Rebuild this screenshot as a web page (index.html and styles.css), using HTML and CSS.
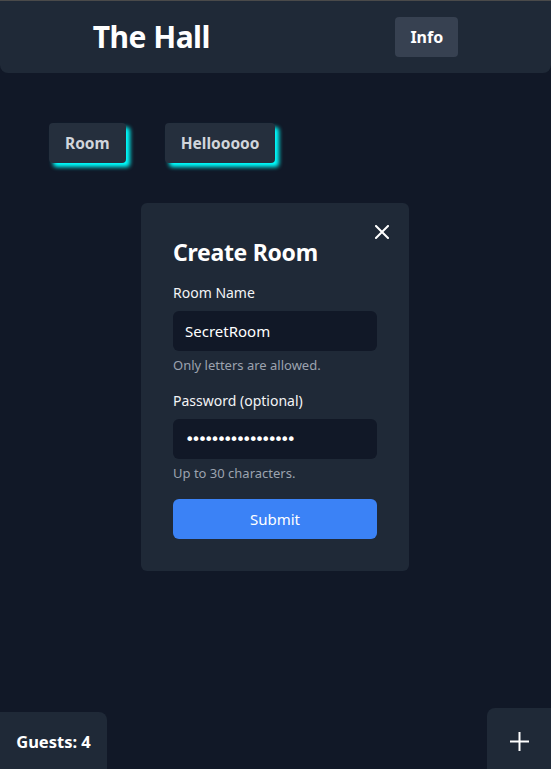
FILE: index.html
```html
<!DOCTYPE html>
<html>
<head>
<meta charset="utf-8">
<link rel="stylesheet" href="styles.css">
</head>
<body>
<div class="topline"></div>
<header class="header">
  <h1 class="title">The Hall</h1>
  <button class="info-btn">Info</button>
</header>
<div class="rooms">
  <button class="room-btn">Room</button>
  <button class="room-btn">Hellooooo</button>
</div>
<div class="modal-wrap">
  <div class="modal">
    <button class="close" aria-label="Close">
      <svg width="14" height="14" viewBox="0 0 14 14"><path d="M1 1L13 13M13 1L1 13" stroke="#fff" stroke-width="2" stroke-linecap="square"/></svg>
    </button>
    <h2 class="modal-title">Create Room</h2>
    <label class="label">Room Name</label>
    <div class="input">SecretRoom</div>
    <p class="hint">Only letters are allowed.</p>
    <label class="label">Password (optional)</label>
    <div class="input dots">•••••••••••••••••</div>
    <p class="hint">Up to 30 characters.</p>
    <button class="submit">Submit</button>
  </div>
</div>
<div class="bottom">
  <div class="guests">Guests: 4</div>
  <button class="plus" aria-label="Add">
    <svg width="19" height="19" viewBox="0 0 19 19"><path d="M9.5 0V19M0 9.5H19" stroke="#fff" stroke-width="2"/></svg>
  </button>
</div>
</body>
</html>
```

FILE: styles.css
```css
* { box-sizing: border-box; }
html, body { margin: 0; padding: 0; }
body {
  background: #111827;
  font-family: "Noto Sans", "Open Sans", sans-serif;
  color: #fff;
  width: 551px;
  height: 769px;
  overflow: hidden;
  display: flex;
  flex-direction: column;
}
button { font-family: inherit; border: none; cursor: pointer; }
.topline { height: 1px; background: #4a4a4a; flex: none; }
.header {
  flex: none;
  height: 72px;
  background: #1f2937;
  border-radius: 0 0 8px 8px;
  display: flex;
  align-items: center;
  justify-content: space-around;
}
.title {
  margin: 0;
  font-size: 30px;
  font-weight: 700;
  line-height: 1;
  letter-spacing: -0.5px;
  color: #fff;
}
.info-btn {
  height: 40px;
  width: 63px;
  background: #374151;
  color: #fff;
  font-weight: 700;
  font-size: 16px;
  border-radius: 4px;
}
.rooms {
  flex: none;
  display: flex;
  gap: 39px;
  padding: 50px 0 0 49px;
}
.room-btn {
  height: 40px;
  padding: 0 16px;
  background: #252f3d;
  color: #d1d5db;
  font-weight: 700;
  font-size: 15.5px;
  border-radius: 4px;
  box-shadow: 4px 4px 4px #00ffff;
}
.modal-wrap {
  flex: none;
  display: flex;
  padding-top: 40px;
  padding-left: 141px;
}
.modal {
  position: relative;
  width: 268px;
  background: #1f2937;
  border-radius: 6px;
  padding: 35px 32px 32px;
  display: flex;
  flex-direction: column;
}
.close {
  position: absolute;
  top: 22px;
  right: 20px;
  background: none;
  padding: 0;
  width: 14px;
  height: 14px;
  display: flex;
}
.modal-title {
  margin: 0 0 17px;
  font-size: 23px;
  font-weight: 700;
  line-height: 28px;
  letter-spacing: -0.3px;
}
.label {
  font-size: 14px;
  font-weight: 400;
  line-height: 20px;
  margin-bottom: 8px;
  color: #f3f4f6;
}
.input {
  height: 40px;
  background: #111827;
  border-radius: 6px;
  padding: 0 12px;
  display: flex;
  align-items: center;
  font-size: 15px;
  color: #fff;
}
.dots { font-size: 16px; letter-spacing: -3.1px; font-family: "DejaVu Sans", sans-serif; }
.hint {
  margin: 4px 0 16px;
  font-size: 13px;
  line-height: 20px;
  color: #9ca3af;
}
.submit {
  height: 40px;
  background: #3b82f6;
  color: #fff;
  font-size: 15px;
  border-radius: 6px;
}
.bottom {
  margin-top: auto;
  display: flex;
  justify-content: space-between;
  align-items: flex-end;
}
.guests {
  height: 57px;
  width: 107px;
  background: #1f2937;
  border-radius: 0 8px 0 0;
  display: flex;
  align-items: center;
  justify-content: center;
  font-weight: 700;
  font-size: 16.5px;
  padding-top: 2px;
}
.plus {
  height: 61px;
  width: 64px;
  background: #1f2937;
  border-radius: 8px 0 0 0;
  display: flex;
  align-items: center;
  justify-content: center;
  padding: 5px 0 0;
}
```
